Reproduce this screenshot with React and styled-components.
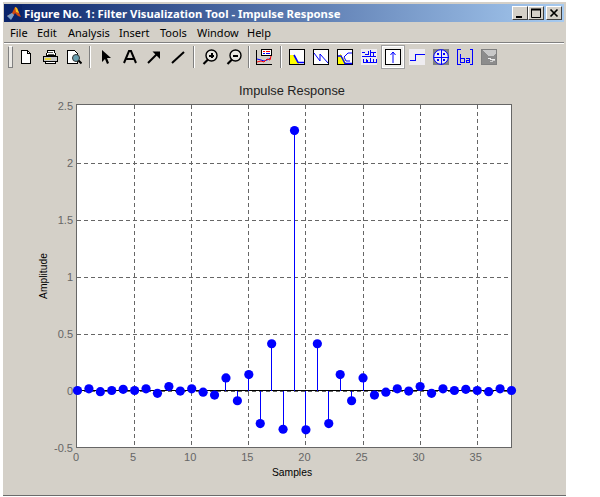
import React from 'react';
import styled, { createGlobalStyle } from 'styled-components';

const GlobalStyle = createGlobalStyle`
  html, body {
    margin: 0;
    background: #fff;
  }
`;

const MENU = [
  ['File', 27],
  ['Edit', 31],
  ['Analysis', 51],
  ['Insert', 41],
  ['Tools', 37],
  ['Window', 50],
  ['Help', 30],
];

const SAMPLES = [
  0, 0.015, -0.01, 0, 0.01, 0, 0.015, -0.025, 0.035, -0.005, 0.015, -0.015, -0.04, 0.11, -0.09,
  0.14, -0.29, 0.41, -0.34, 2.28, -0.345, 0.41, -0.29, 0.14, -0.09, 0.11, -0.04, -0.015, 0.015,
  -0.005, 0.035, -0.025, 0.015, 0, 0.01, 0, -0.01, 0.015, 0,
];

const LEFT = 77;
const RIGHT = 511;
const TOP = 105;
const BOTTOM = 447;
const sx = (n) => LEFT + (n * (RIGHT - LEFT)) / 38;
const sy = (v) => 390.5 - v * 114;

const Window = styled.div`
  width: 560px;
  height: 491px;
  margin: 2px 0 0 3px;
  padding: 2px 2px 0 1px;
  display: flex;
  flex-direction: column;
  background: #d4d0c8;
  border-bottom: 1px solid #6b6b6b;
`;

const TitleBar = styled.div`
  height: 18px;
  flex: none;
  display: flex;
  align-items: center;
  padding: 0 2px 0 2px;
  background: linear-gradient(90deg, #0a246a, #a6caf0);
`;

const Title = styled.div`
  flex: 1;
  margin-left: 2px;
  color: #fff;
  font: bold 11.3px 'Noto Sans', sans-serif;
  white-space: nowrap;
`;

const CaptionButton = styled.div`
  width: 16px;
  height: 14px;
  margin-left: ${(p) => p.$gap || 0}px;
  box-sizing: border-box;
  background: #d4d0c8;
  border: 1px solid;
  border-color: #fff #404040 #404040 #fff;
  display: flex;
  align-items: center;
  justify-content: center;
`;

const MenuBar = styled.div`
  height: 20px;
  flex: none;
  display: flex;
  align-items: center;
  padding-left: 6px;
  box-sizing: border-box;
`;

const MenuItem = styled.div`
  width: ${(p) => p.$w}px;
  font: 11px 'Noto Sans', sans-serif;
  color: #000;
`;

const Rule = styled.div`
  height: 1px;
  flex: none;
  background: #808080;
  border-bottom: 1px solid #fff;
`;

const Toolbar = styled.div`
  height: 26px;
  flex: none;
  display: flex;
  align-items: center;
  padding-left: 4px;
`;

const Grip = styled.div`
  width: 5px;
  height: 22px;
  margin-right: 1px;
  background: #eceae6;
  border: 1px solid;
  border-color: #fff #808080 #808080 #808080;
  box-sizing: border-box;
  flex: none;
`;

const ToolButton = styled.div`
  width: 24px;
  height: 24px;
  flex: none;
  display: flex;
  align-items: center;
  justify-content: center;
`;

const PressedFrame = styled.div`
  width: 24px;
  height: 24px;
  box-sizing: border-box;
  border: 2px solid #fff;
  outline: 1px solid #a0a0a0;
  outline-offset: -1px;
  background: #eeedea;
  display: flex;
  align-items: center;
  justify-content: center;
`;

const Separator = styled.div`
  width: ${(p) => p.$w || 8}px;
  height: 22px;
  flex: none;
  display: flex;
  justify-content: center;
  &::before {
    content: '';
    width: 1px;
    background: #808080;
    border-right: 1px solid #fff;
  }
`;

const PlotArea = styled.div`
  flex: 1;
  min-height: 0;
`;

const Chart = styled.svg`
  display: block;
  width: 560px;
  height: 425px;
  font-family: 'Liberation Sans', sans-serif;
`;

const Icon = ({ children }) => (
  <svg width="16" height="16" viewBox="0 0 16 16" fill="none" shapeRendering="crispEdges">
    {children}
  </svg>
);

const NewIcon = () => (
  <Icon>
    <path d="M3.5 1.5h6l3 3v10h-9z" fill="#fff" stroke="#000" />
    <path d="M9.5 1.5v3h3" stroke="#000" />
  </Icon>
);

const PrintIcon = () => (
  <Icon>
    <path d="M5.5 1.5h7l1 5h-9z" fill="#fff" stroke="#000" />
    <path d="M6 3.5h5M6 5.5h6" stroke="#555" />
    <path d="M1.5 7.5h14v5h-14z" fill="#c8c8c8" stroke="#000" />
    <path d="M3 9.5h6" stroke="#e8d840" strokeWidth="2" />
    <path d="M3.5 12.5h10v2h-10z" fill="#fff" stroke="#000" />
  </Icon>
);

const PreviewIcon = () => (
  <Icon>
    <path d="M1.5 1.5h7l3 3v10h-10z" fill="#fff" stroke="#000" />
    <circle cx="10" cy="9" r="3.5" fill="#6aa0b0" stroke="#333" shapeRendering="auto" />
    <path d="M12.5 11.5l3 3" stroke="#000" strokeWidth="2" shapeRendering="auto" />
  </Icon>
);

const PointerIcon = () => (
  <Icon>
    <path d="M4 1v12l3-3 2 5 2-1-2-5h4z" fill="#000" shapeRendering="auto" />
  </Icon>
);

const TextIcon = () => (
  <Icon>
    <path d="M2 14L7 2h2l5 12M4.5 10h7" stroke="#000" strokeWidth="2" shapeRendering="auto" />
  </Icon>
);

const ArrowIcon = () => (
  <Icon>
    <path d="M2 14L12.5 3.5" stroke="#000" strokeWidth="2" shapeRendering="auto" />
    <path d="M6.5 2.5H14V10z" fill="#000" shapeRendering="auto" />
  </Icon>
);

const LineIcon = () => (
  <Icon>
    <path d="M2 14L14 3" stroke="#000" strokeWidth="2" shapeRendering="auto" />
  </Icon>
);

const ZoomIcon = ({ plus }) => (
  <Icon>
    <g shapeRendering="auto">
      <circle cx="9.5" cy="6.5" r="5.5" fill="#e8e6e0" stroke="#000" strokeWidth="1.4" />
      <path d="M6 10.5L1.5 15" stroke="#000" strokeWidth="2.2" />
    </g>
    <path d="M7 6.5h5" stroke="#000" strokeWidth="2" />
    {plus && <path d="M9.5 4v5" stroke="#000" strokeWidth="2" />}
  </Icon>
);

const LegendIcon = () => (
  <Icon>
    <path d="M0.5 0.5v15h16" stroke="#000" />
    <path d="M5.5 0.5h10v6h-10z" fill="#fff" stroke="#000" />
    <path d="M7 2.5h2M10 2.5h4" stroke="#f00" />
    <path d="M7 4.5h2M10 4.5h4" stroke="#00f" />
    <path d="M1 10l4 1 3 1 3-1 4-2" stroke="#00f" shapeRendering="auto" />
    <path d="M1 13l4-1 3 1 3-3 3 1 1-4" stroke="#f00" shapeRendering="auto" />
  </Icon>
);

const MagnitudeIcon = () => (
  <Icon>
    <rect x="0.5" y="0.5" width="15" height="15" fill="#fff" stroke="#000" />
    <path d="M1 15V6h4l5 9z" fill="#ffff00" />
    <path d="M5 6l4 7.5h6" stroke="#00f" strokeWidth="1.6" shapeRendering="auto" />
  </Icon>
);

const PhaseIcon = () => (
  <Icon>
    <rect x="0.5" y="0.5" width="15" height="15" fill="#fff" stroke="#000" />
    <path d="M1 4l6 8V5l8 9" stroke="#00f" shapeRendering="auto" />
  </Icon>
);

const MagPhaseIcon = () => (
  <Icon>
    <rect x="0.5" y="0.5" width="15" height="15" fill="#fff" stroke="#000" />
    <path d="M1 15V7l3-2 6 10z" fill="#ffff00" />
    <path d="M1 7h3l4 7.5h7" stroke="#00f" strokeWidth="1.3" shapeRendering="auto" />
    <path d="M15 4h-4L7 8l2 4h4" stroke="#00f" shapeRendering="auto" />
  </Icon>
);

const DelayIcon = () => (
  <Icon>
    <rect width="16" height="16" fill="#eeecf0" />
    <path d="M1 7.5h14" stroke="#00f" />
    <path d="M1 3.5h3M4 5.5h3v-4M9 1v6M9 3.5h3v3M12 3.5h3" stroke="#00f" />
    <path d="M2 10v3.5h3V10M9 9v4.5H6V11M9 13.5h3V10M12 13.5h3V10" stroke="#00f" />
  </Icon>
);

const ImpulseIcon = () => (
  <Icon>
    <rect x="0.5" y="0.5" width="15" height="15" fill="#fff" stroke="#000" />
    <path d="M8 14V3M5.5 6L8 3l2.5 3" stroke="#00f" shapeRendering="auto" />
  </Icon>
);

const StepIcon = () => (
  <Icon>
    <rect width="16" height="16" fill="#eeecf0" />
    <path d="M1 11.5h5.5v-6H16" stroke="#00f" />
  </Icon>
);

const PoleZeroIcon = () => (
  <Icon>
    <rect width="16" height="16" fill="#808080" />
    <circle cx="8" cy="8" r="7.3" fill="#eeecf0" stroke="#00f" shapeRendering="auto" />
    <path d="M0.5 8h15M8 0.5v15" stroke="#00f" />
    <path d="M4 4l2 2M6 4l-2 2M10 4l2 2M12 4l-2 2M4 10l2 2M6 10l-2 2M10 10l2 2M12 10l-2 2" stroke="#00f" shapeRendering="auto" />
  </Icon>
);

const CoeffIcon = () => (
  <Icon>
    <path d="M3.5 0.5h-3v15h3M12.5 0.5h3v15h-3" stroke="#00f" />
    <path d="M3.5 5v8h3.5v-4h-3.5" stroke="#00f" />
    <path d="M9 9h3.5v4H9v-2h3.5" stroke="#00f" />
  </Icon>
);

const InfoIcon = () => (
  <Icon>
    <rect x="0.5" y="0.5" width="15" height="15" fill="#8c8c8c" stroke="#808080" />
    <path d="M1 1h14v3l-3 3H7z" fill="#c8c8c8" />
    <path d="M7 9h2v1h5" stroke="#eee" />
    <path d="M9 12h2v-1h3" stroke="#ccc" />
  </Icon>
);

const TOOLS_A = [<NewIcon />, <PrintIcon />, <PreviewIcon />];
const TOOLS_B = [<PointerIcon />, <TextIcon />, <ArrowIcon />, <LineIcon />];
const TOOLS_C = [<MagnitudeIcon />, <PhaseIcon />, <MagPhaseIcon />, <DelayIcon />];
const TOOLS_D = [<StepIcon />, <PoleZeroIcon />, <CoeffIcon />, <InfoIcon />];

const tools = (list) => list.map((icon, i) => <ToolButton key={i}>{icon}</ToolButton>);

const Plot = () => {
  const yTicks = [-0.5, 0, 0.5, 1, 1.5, 2, 2.5];
  const xTicks = [0, 5, 10, 15, 20, 25, 30, 35];
  return (
    <Chart viewBox="4 70 560 425" shapeRendering="crispEdges">
      <rect x={LEFT} y={TOP} width={RIGHT - LEFT} height={BOTTOM - TOP} fill="#fff" />
      <g stroke="#666" strokeDasharray="4 3">
        {xTicks.slice(1).map((t) => (
          <line key={t} x1={Math.round(sx(t)) + 0.5} x2={Math.round(sx(t)) + 0.5} y1={TOP} y2={BOTTOM} />
        ))}
        {yTicks.slice(1, -1).map((t) => (
          <line key={t} x1={LEFT} x2={RIGHT} y1={Math.round(sy(t)) + 0.5} y2={Math.round(sy(t)) + 0.5} />
        ))}
      </g>
      <rect x={LEFT - 0.5} y={TOP - 0.5} width={RIGHT - LEFT + 1} height={BOTTOM - TOP + 1} fill="none" stroke="#666" />
      <line x1={LEFT} x2={RIGHT} y1="390.5" y2="390.5" stroke="#000" />
      <g stroke="#0000ff">
        {SAMPLES.map((v, i) => (
          <line key={i} x1={Math.round(sx(i)) + 0.5} x2={Math.round(sx(i)) + 0.5} y1="390.5" y2={sy(v)} />
        ))}
      </g>
      <g fill="#0000ff" shapeRendering="auto">
        {SAMPLES.map((v, i) => (
          <circle key={i} cx={sx(i) + 0.5} cy={sy(v)} r="4.6" />
        ))}
      </g>
      <g shapeRendering="auto" fontSize="11" fill="#666">
        {yTicks.map((t) => (
          <text key={t} x="73" y={sy(t) + 4} textAnchor="end">{t}</text>
        ))}
        {xTicks.map((t) => (
          <text key={t} x={sx(t) - 1} y="461" textAnchor="middle">{t}</text>
        ))}
      </g>
      <g shapeRendering="auto" fill="#000">
        <text x="292" y="95" fontSize="12.8" textAnchor="middle" fill="#222">Impulse Response</text>
        <text x="292" y="476" fontSize="10.3" textAnchor="middle">Samples</text>
        <text transform="translate(47 276) rotate(-90)" fontSize="10.3" textAnchor="middle">Amplitude</text>
      </g>
    </Chart>
  );
};

const App = () => (
  <>
    <GlobalStyle />
    <Window>
      <TitleBar>
        <svg width="16" height="16" viewBox="0 0 16 16">
          <rect width="16" height="16" fill="#0a246a" />
          <path d="M1 11l5-3 3-6 2 1 4 9-3-1-3-3-3 5z" fill="#d04810" />
          <path d="M1 11l5-3 2 2-3 5z" fill="#7aa0c8" />
          <path d="M9 2l2 1 2 5-3-1z" fill="#f0c020" />
        </svg>
        <Title>Figure No. 1: Filter Visualization Tool - Impulse Response</Title>
        <CaptionButton>
          <svg width="10" height="10" viewBox="0 0 10 10"><path d="M1 8h6v2H1z" fill="#000" /></svg>
        </CaptionButton>
        <CaptionButton>
          <svg width="12" height="10" viewBox="0 0 12 10" fill="none">
            <path d="M1.5 1.5h9v8h-9z" stroke="#000" />
            <path d="M1 1.5h10" stroke="#000" strokeWidth="2" />
          </svg>
        </CaptionButton>
        <CaptionButton $gap={2}>
          <svg width="10" height="10" viewBox="0 0 10 10" fill="none">
            <path d="M1.5 1.5l7 7M8.5 1.5l-7 7" stroke="#000" strokeWidth="1.7" />
          </svg>
        </CaptionButton>
      </TitleBar>
      <MenuBar>
        {MENU.map(([label, w]) => (
          <MenuItem key={label} $w={w}>{label}</MenuItem>
        ))}
      </MenuBar>
      <Rule />
      <Toolbar>
        <Grip />
        {tools(TOOLS_A)}
        <Separator />
        {tools(TOOLS_B)}
        <Separator />
        {tools([<ZoomIcon plus />, <ZoomIcon />])}
        <Separator $w={6} />
        <ToolButton><LegendIcon /></ToolButton>
        <Separator $w={9} />
        {tools(TOOLS_C)}
        <PressedFrame><ImpulseIcon /></PressedFrame>
        {tools(TOOLS_D)}
      </Toolbar>
      <PlotArea>
        <Plot />
      </PlotArea>
    </Window>
  </>
);

export default App;
